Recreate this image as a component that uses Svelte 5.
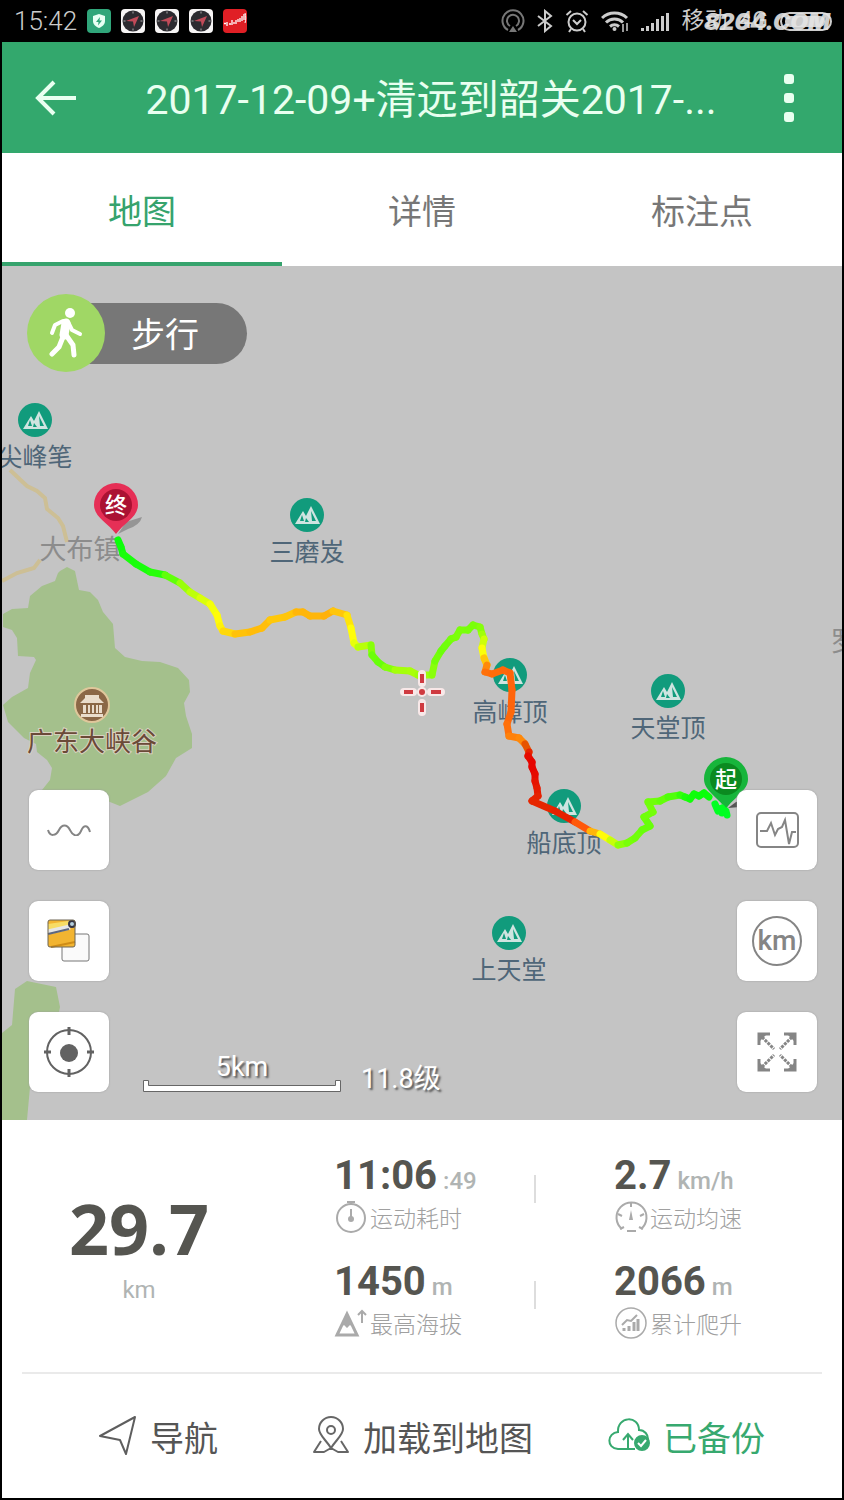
<script>
    let activeTab = "map";
    let lineMode = "wave";

    const tabs = [
        { id: "map", label: "地图" },
        { id: "detail", label: "详情" },
        { id: "points", label: "标注点" }
    ];

    const metrics = [
        { icon: "watch", value: "11:06", unit: ":49", label: "运动耗时", divider: true },
        { icon: "gauge", value: "2.7", unit: "km/h", label: "运动均速" },
        { icon: "peak", value: "1450", unit: "m", label: "最高海拔", divider: true },
        { icon: "climb", value: "2066", unit: "m", label: "累计爬升" }
    ];

    const peaks = [
        { x: 35, y: 420, name: "尖峰笔" },
        { x: 307, y: 515, name: "三磨岌" },
        { x: 510, y: 675, name: "高嶂顶" },
        { x: 668, y: 691, name: "天堂顶" },
        { x: 564, y: 806, name: "船底顶" },
        { x: 509, y: 933, name: "上天堂" }
    ];

    // x, y, hue (120 = easy, 0 = steep)
    const track = [
        [118, 540, 120], [121, 547, 120], [123, 554, 118], [136, 564, 115], [150, 572, 118], [165, 575, 108],
        [180, 583, 90], [190, 592, 80], [200, 598, 72], [210, 604, 66], [217, 615, 60], [220, 626, 58],
        [223, 631, 55], [235, 634, 46], [250, 632, 44], [262, 628, 43], [270, 620, 45], [285, 617, 48],
        [296, 612, 44], [303, 612, 40], [310, 616, 44], [324, 616, 40], [333, 611, 42], [347, 615, 50],
        [351, 628, 57], [354, 643, 62], [358, 647, 70], [371, 645, 85], [372, 655, 94], [378, 662, 98],
        [385, 667, 96], [395, 670, 84], [410, 671, 80], [418, 675, 82], [432, 675, 86], [435, 661, 92],
        [441, 651, 96], [445, 646, 96], [451, 639, 94], [456, 637, 92], [460, 630, 92], [468, 630, 93],
        [473, 625, 93], [480, 627, 92], [482, 634, 88], [484, 639, 78], [482, 648, 66], [484, 658, 56],
        [487, 665, 36], [485, 672, 26], [492, 674, 24], [503, 670, 24], [510, 673, 22], [512, 690, 22],
        [511, 712, 22], [507, 724, 24], [509, 736, 26], [519, 738, 32], [525, 744, 30], [529, 752, 14],
        [528, 756, 4], [532, 762, 2], [532, 767, 0], [535, 774, 2], [535, 781, 4], [537, 788, 6],
        [538, 796, 8], [532, 801, 10], [555, 811, 10], [575, 822, 8], [590, 831, 30], [600, 834, 54],
        [610, 840, 64], [618, 845, 84], [627, 843, 92], [635, 838, 94], [642, 830, 96], [650, 826, 98],
        [644, 817, 96], [653, 812, 94], [648, 802, 94], [660, 801, 96], [668, 797, 100], [680, 795, 106],
        [685, 797, 114], [690, 799, 118], [694, 794, 118], [699, 796, 120], [704, 793, 120], [709, 797, 120]
    ];

    const tail = "M715 804l3 7 4 -3 0 5 4 -2 1 4";

    const segments = track.slice(1).map((point, i) => ({
        from: track[i],
        to: point,
        color: `hsl(${(track[i][2] + point[2]) / 2} 100% ${point[2] < 15 ? 45 : 52}%)`
    }));
</script>

<div class="screen">
    <div class="status">
        <span class="clock">15:42</span>
        <div class="apps">
            <svg viewBox="0 0 24 24">
                <rect width="24" height="24" rx="4" fill="#30a67a" />
                <path d="M12 5l6 2v5c0 3.500-2.500 5.500-6 7-3.500-1.500-6-3.500-6-7V7z" fill="#e8fff4" />
                <path d="M13 8l-4 5h2.500l-.5 3.500 4-5h-2.500z" fill="#30a67a" />
            </svg>
            {#each [1, 2, 3] as app}
                <svg viewBox="0 0 24 24">
                    <rect width="24" height="24" rx="4" fill="#f7f5f5" />
                    <circle cx="12" cy="12" r="10.500" fill="#2c2b30" />
                    <path d="M12 2.500v2M12 19.500v2M2.500 12h2M19.500 12h2" stroke="#aaa" />
                    <path d="M18 7l-5 11-1-5.500L5 12z" fill="#c04a58" />
                </svg>
            {/each}
            <svg viewBox="0 0 24 24">
                <rect width="24" height="24" rx="4" fill="#e01f25" />
                <path d="M1 14.500h2M4 13v4M6 15h2M9 11v5M11 13v2M13 11v4M15 10v3M17 9v4M19 7v5M21 5v6" fill="none" stroke="#fff" stroke-width="1.300" />
                <path d="M22 4c1 3 1 7 0 10" fill="none" stroke="#fff" />
            </svg>
        </div>
        <div class="signals">
            <svg width="24" height="24" viewBox="0 0 24 24" fill="none" stroke="#777" stroke-width="2">
                <path d="M7 21a10.500 10.500 0 1 1 10 0M9 17a6 6 0 1 1 6 0" />
                <path d="M12 17l4 6H8z" fill="#777" stroke="none" />
            </svg>
            <svg width="16" height="24" viewBox="0 0 16 24" fill="none" stroke="#ccc" stroke-width="2">
                <path d="M1 7l13 10-6 5V2l6 5L1 17" />
            </svg>
            <svg width="24" height="24" viewBox="0 0 24 24" fill="none" stroke="#ccc" stroke-width="2">
                <circle cx="12" cy="13" r="8.500" />
                <path d="M8 11l4 4 4-4M1.500 6L6 2M22.500 6L18 2M6 20l-2 3M18 20l2 3" />
            </svg>
            <svg width="28" height="24" viewBox="0 0 28 24" fill="none" stroke="#ccc" stroke-width="3">
                <path d="M1 9a18 18 0 0 1 25 0M5 13.500a12 12 0 0 1 17 0M9 17.500a7 7 0 0 1 9 0" />
                <circle cx="13.500" cy="20" r="2" fill="#ccc" stroke="none" />
                <path d="M22 15v8M26 14v8" stroke-width="1.500" />
            </svg>
            <svg width="28" height="24" viewBox="0 0 28 24" fill="#ccc">
                <path d="M0 19h3v3H0zM5 17h3v5H5zM10 14h3v8h-3zM15 10h3v12h-3zM20 7h3v15h-3zM25 4h3v18h-3z" />
            </svg>
            <span>移动</span>
            <span>4G</span>
            <svg width="52" height="24" viewBox="0 0 52 24">
                <rect x="1" y="4" width="50" height="17" rx="8.500" fill="none" stroke="#ccc" stroke-width="2" />
                <rect x="5" y="7" width="40" height="11" rx="5" fill="#ccc" />
            </svg>
        </div>
        <span class="watermark">8264.COM</span>
    </div>

    <header>
        <button class="plain" aria-label="返回">
            <svg width="44" height="40" viewBox="0 0 44 40" fill="none" stroke="#e9fff0" stroke-width="4">
                <path d="M20 4L4 20l16 16M4 20h38" />
            </svg>
        </button>
        <h1>2017-12-09+清远到韶关2017-...</h1>
        <button class="plain more" aria-label="更多">
            <svg width="10" height="50" viewBox="0 0 10 50" fill="#e9fff0">
                <rect y="1" width="10" height="10" rx="3" />
                <rect y="20" width="10" height="10" rx="3" />
                <rect y="39" width="10" height="10" rx="3" />
            </svg>
        </button>
    </header>

    <nav>
        {#each tabs as tab}
            <button class:active={activeTab === tab.id} on:click={() => (activeTab = tab.id)}>{tab.label}</button>
        {/each}
    </nav>

    <main>
        <svg class="canvas" viewBox="2 266 840 854" preserveAspectRatio="xMidYMid slice">
            <g fill="none" stroke="#cdbf95" stroke-width="4">
                <path d="M10 470l17 16 10 5 8 7 2 11 11 9 5 8 4 16M2 581l15-8 17-5 6-8" />
            </g>
            <path
                fill="#a4c08c"
                d="M60 571L67 567 75 571 79 590 90 592 98 600 103 612 113 624 115 648 125 657 142 661 160 662 178 668 189 680 190 692 184 703 186 716 192 734 192 748 176 758 166 776 148 792 120 806 105 800 42 790 50 780 52 768 47 760 37 752 36 744 24 738 8 722 3 705 12 697 28 688 30 673 36 660 34 657 18 656 17 638 12 630 3 627 3 614 12 609 28 608 30 596 42 586 55 581 58 573z"
            />
            <path fill="#a4c08c" d="M15 989l12-8 29 6 4 20-10 50-18 8-5 55H2V1033l10-8z" />

            {#each peaks as peak}
                <g transform="translate({peak.x} {peak.y})">
                    <circle r="17" fill="#119b7c" />
                    <path d="M-12 9L-4-4-1 1 4-9 13 9z" fill="#cfe4e0" />
                    <path d="M-5 0l2 6h-4zM-1 3l3 4h-4zM4-4l5 10H5z" fill="#119b7c" />
                    <text class="peak" y="46">{peak.name}</text>
                </g>
            {/each}
            <text class="town" x="80" y="559">大布镇</text>
            <text class="town" x="844" y="651">罗</text>

            <g transform="translate(92 705)">
                <circle r="17" fill="#8b6746" stroke="#dfc79b" stroke-width="2" />
                <path d="M-7-10H7V-7L12-2H-12l5-5zM-9 0h3v8h-3zM-4 0h2v8h-2zM0 0h2v8H0zM4 0h2v8H4zM7 0h3v8H7zM-11 9h22v3h-22z" fill="#eadccb" />
                <text class="scenic" y="46">广东大峡谷</text>
            </g>

            <path d="M118 534l8-12 16-5q-2 8-14 12z" fill="#777" opacity=".6" />
            <path d="M116 534C108 523 94 517 94 505a22 22 0 0 1 44 0c0 12-14 18-22 29z" fill="#e62f56" />
            <circle cx="116" cy="505" r="16" fill="#ab1233" />
            <text class="mark" x="116" y="513">终</text>

            <path d="M728 808l8-6 12-3-8 8z" fill="#555" />
            <path d="M726 809C718 797 704 791 704 779a22 22 0 0 1 44 0c0 12-14 18-22 30z" fill="#17b53b" />
            <circle cx="726" cy="779" r="16" fill="#0b8a20" />
            <text class="mark" x="726" y="787">起</text>

            <g fill="none" stroke-width="7" stroke-linecap="round" stroke-linejoin="round">
                {#each segments as s}
                    <path d="M{s.from[0]} {s.from[1]}L{s.to[0]} {s.to[1]}" stroke={s.color} />
                {/each}
                <path d={tail} stroke="#0f2" />
            </g>

            <g stroke-linecap="round">
                <path d="M422 674v9M422 703v9M404 692h9M431 692h10" stroke="#f8e8e8" stroke-width="8" />
                <circle cx="422" cy="692" r="5" fill="#f8e8e8" />
                <path d="M422 674v9M422 703v9M404 692h9M431 692h10" stroke="#cf3a40" stroke-width="4" stroke-linecap="butt" />
                <circle cx="422" cy="692" r="3" fill="#cf3a40" />
            </g>
        </svg>

        <div class="mode">
            <span class="walker">
                <svg width="34" height="50" viewBox="0 0 34 50">
                    <circle cx="21" cy="5" r="5" fill="#fff" />
                    <g fill="none" stroke="#fff" stroke-linecap="round" stroke-linejoin="round">
                        <path d="M17 15L15 27" stroke-width="9" />
                        <path d="M14 13L6 17 3 25M19 14l4 8 8 4" stroke-width="4" />
                        <path d="M14 29L10 39 3 46M17 27l7 10 1 10" stroke-width="5" />
                    </g>
                </svg>
            </span>
            <span class="pill">步行</span>
        </div>

        <div class="tools left">
            <button aria-label="轨迹线" on:click={() => (lineMode = lineMode === "wave" ? "flat" : "wave")}>
                <svg width="44" height="12" viewBox="0 0 44 12" fill="none" stroke="#858585" stroke-width="2">
                    <path d="M1 6C3 13 9 12 12 6S20 0 23 6s8 8 11 1 7-6 9 1" />
                </svg>
            </button>
            <button aria-label="图层">
                <svg width="44" height="44" viewBox="0 0 44 44">
                    <rect x="15" y="15" width="27" height="27" rx="2" fill="#fafafa" stroke="#777" />
                    <rect x="1" y="1" width="27" height="27" rx="2" fill="#f2b431" />
                    <path d="M1 5l27-4v5L1 11z" fill="#f7dc65" />
                    <path d="M1 13l22-5" stroke="#e6e6e6" stroke-width="5" />
                    <path d="M1 15l21-5" stroke="#5d6780" stroke-width="2" />
                    <path d="M4 28l24-5" stroke="#cf8c16" stroke-width="2" />
                    <circle cx="25" cy="5" r="3" fill="#b5d0de" stroke="#334" stroke-width="2" />
                    <rect x="1" y="1" width="27" height="27" rx="2" fill="none" stroke="#6d6452" />
                </svg>
            </button>
            <button aria-label="定位">
                <svg width="52" height="52" viewBox="0 0 52 52" fill="none" stroke="#626262">
                    <circle cx="26" cy="26" r="22" stroke-width="2" />
                    <path d="M26 1v8M26 43v8M1 26h7M44 26h7" stroke-width="3" />
                    <circle cx="26" cy="27" r="9" fill="#626262" stroke="none" />
                </svg>
            </button>
        </div>

        <div class="tools right">
            <button aria-label="图表">
                <svg width="44" height="36" viewBox="0 0 44 36" fill="none" stroke="#858585" stroke-width="2">
                    <rect x="2" y="1" width="41" height="34" rx="4" />
                    <path d="M5 19h7l4-8 4 12 3-6 4-2 3-7 4 24 3-12h4" />
                </svg>
            </button>
            <button aria-label="公里">
                <svg width="50" height="50" viewBox="0 0 50 50">
                    <circle cx="25" cy="25" r="24" fill="none" stroke="#858585" stroke-width="2" />
                    <text class="kmText" x="25" y="34">km</text>
                </svg>
            </button>
            <button aria-label="全屏">
                <svg width="40" height="40" viewBox="0 0 40 40" fill="none" stroke="#858585" stroke-width="3">
                    <path d="M2 13V2h11M27 2h11v11M38 27v11H27M13 38H2V27" />
                    <path d="M3 3h6l-6 6zM37 3h-6l6 6zM37 37h-6l6-6zM3 37h6l-6-6z" fill="#858585" stroke="none" />
                    <path d="M5 5l12 12M35 5L23 17M35 35L23 23M5 35l12-12" stroke-dasharray="3 1" />
                </svg>
            </button>
        </div>

        <div class="scale">
            <div class="ruler">
                <span>5km</span>
                <svg width="198" height="12" viewBox="0 0 198 12">
                    <path d="M.5.5h5v5h187v-5h5v11H.5z" fill="#fff" stroke="#666" />
                </svg>
            </div>
            <span>11.8级</span>
        </div>
    </main>

    <section class="stats">
        <div class="distance">
            <strong>29.7</strong>
            <span>km</span>
        </div>
        <div class="metrics">
            {#each metrics as m}
                <div class="metric">
                    <div>
                        <p class="value"><strong>{m.value}</strong> <span>{m.unit}</span></p>
                        <p class="label">
                            <svg width="34" height="34" viewBox="0 0 34 34" fill="none" stroke="#aaa" stroke-width="2">
                                {#if m.icon === "watch"}
                                    <circle cx="17" cy="18" r="14" />
                                    <path d="M13 2h8M17 2v3M17 9v9" />
                                    <circle cx="17" cy="19" r="2" fill="#aaa" />
                                {:else if m.icon === "gauge"}
                                    <path d="M8 29a15 15 0 1 1 19 0" />
                                    <path d="M17 3v4M4 14l4 2M30 14l-4 2M6 29l4-2M29 29l-4-2M13 31h9" stroke-width="2" />
                                    <path d="M17 10l2 10h-4z" fill="#aaa" stroke="none" />
                                {:else if m.icon === "peak"}
                                    <path d="M3 29L13 8l10 21z" stroke-width="3" />
                                    <path d="M13 7l6 14-3-2-3 3-3-3-3 2z" fill="#aaa" stroke="none" />
                                    <path d="M28 17V5M24 9l4-4 4 4" />
                                {:else}
                                    <circle cx="17" cy="17" r="15" stroke-width="1.500" />
                                    <path d="M8 19l5-5 4 1 6-6" />
                                    <path d="M10 22v3M15 20v5M20 16v9M24 13v12" stroke-width="3" />
                                {/if}
                            </svg>
                            {m.label}
                        </p>
                    </div>
                    {#if m.divider}
                        <i></i>
                    {/if}
                </div>
            {/each}
        </div>
    </section>

    <footer>
        <button>
            <svg width="40" height="44" viewBox="0 0 40 44" fill="none" stroke="#5e5e5e" stroke-width="2" stroke-linejoin="round">
                <path d="M37 3L2 22l20 4 6 14z" />
            </svg>
            导航
        </button>
        <button>
            <svg width="40" height="44" viewBox="0 0 40 44" fill="none" stroke="#666" stroke-width="2" stroke-linejoin="round">
                <path d="M20 34C15 26 8 21 8 15a12 12 0 0 1 24 0c0 6-7 11-12 19z" />
                <circle cx="20" cy="16" r="4" />
                <path d="M10 27L3 38h10l7-4 7 4h10l-7-11" />
            </svg>
            加载到地图
        </button>
        <button class="saved">
            <svg width="44" height="44" viewBox="0 0 44 44" fill="none" stroke="#37a96f" stroke-width="2">
                <path d="M28 35H11C-1 34 0 19 11 18 10 2 32 1 32 16c6 0 9 5 9 9" />
                <path d="M21 34V21M16 26l5-6 5 6" />
                <circle cx="35" cy="29" r="7" fill="#37a96f" />
                <path d="M31 29l3 3 5-6" stroke="#fff" />
            </svg>
            已备份
        </button>
    </footer>
</div>

<style>
    :global(body) {
        margin: 0;
        background: #000;
    }

    .screen {
        font-family: Roboto, "Noto Sans CJK SC", sans-serif;
        border: 2px solid #000;
        border-top: 0;
        background: #fff;
        color: #555;
    }

    .screen svg {
        display: block;
        flex-shrink: 0;
    }

    button {
        font: inherit;
        color: inherit;
        border: 0;
        padding: 0;
        background: none;
        cursor: pointer;
    }

    .status {
        position: relative;
        display: flex;
        align-items: center;
        height: 42px;
        padding: 0 10px 0 12px;
        background: #000;
        color: #ccc;
        font-size: 24px;
    }

    .clock {
        font-size: 26px;
        font-weight: 300;
    }

    .apps {
        display: flex;
        gap: 10px;
        margin-left: 10px;
    }

    .apps svg {
        width: 24px;
        height: 24px;
    }

    .signals {
        display: flex;
        align-items: center;
        gap: 12px;
        margin-left: auto;
        font-size: 23px;
        line-height: 24px;
    }

    .watermark {
        position: absolute;
        right: 12px;
        top: 8px;
        font: italic 900 23px/28px Inter, sans-serif;
        color: #e4e4e4;
        opacity: 0.9;
    }

    header {
        display: flex;
        align-items: center;
        justify-content: space-between;
        height: 111px;
        padding: 0 48px 0 32px;
        background: #33a86d;
    }

    h1 {
        margin: 0;
        padding-bottom: 4px;
        font-size: 41px;
        font-weight: 400;
        color: #e9fff0;
        white-space: nowrap;
    }

    nav {
        display: grid;
        grid-template-columns: repeat(3, 1fr);
        height: 113px;
    }

    nav button {
        font-size: 34px;
        color: #777;
        border-top: 4px solid transparent;
        border-bottom: 4px solid transparent;
    }

    nav button.active {
        color: #36a36d;
        border-bottom-color: #36a36d;
    }

    main {
        position: relative;
        height: 854px;
        background: #c4c4c4;
        overflow: hidden;
    }

    .canvas {
        width: 100%;
        height: 100%;
    }

    .canvas text {
        text-anchor: middle;
    }

    .peak {
        font-size: 25px;
        fill: #4f6678;
    }

    .town {
        font-size: 27px;
        fill: #8c8c8c;
    }

    .scenic {
        font-size: 26px;
        fill: #6b4a38;
        stroke: #d9d2c0;
        stroke-width: 2px;
        paint-order: stroke;
    }

    .mark {
        font-size: 22px;
        font-weight: 500;
        fill: #fff;
    }

    .mode {
        position: absolute;
        left: 25px;
        top: 28px;
        display: flex;
        align-items: center;
    }

    .walker {
        display: grid;
        place-items: center;
        width: 78px;
        height: 78px;
        border-radius: 50%;
        background: #a0d765;
        z-index: 1;
    }

    .pill {
        margin-left: -16px;
        padding: 4px 48px 0 42px;
        border-radius: 0 31px 31px 0;
        background: #777;
        color: #fff;
        font-size: 34px;
        line-height: 57px;
    }

    .tools {
        position: absolute;
        bottom: 28px;
        display: flex;
        flex-direction: column;
        gap: 31px;
    }

    .tools.left {
        left: 27px;
    }

    .tools.right {
        right: 25px;
    }

    .tools button {
        display: grid;
        place-items: center;
        width: 80px;
        height: 80px;
        border-radius: 9px;
        background: #fff;
        box-shadow: 0 0 2px #999;
    }

    .kmText {
        font-size: 28px;
        font-weight: 500;
        fill: #858585;
        text-anchor: middle;
    }

    .scale {
        position: absolute;
        left: 141px;
        bottom: 28px;
        display: flex;
        align-items: flex-end;
        gap: 20px;
        color: #fff;
        font-size: 27px;
        line-height: 26px;
        text-shadow: 2px 2px 2px #555;
    }

    .ruler {
        display: flex;
        flex-direction: column;
        align-items: center;
    }

    .stats {
        display: grid;
        grid-template-columns: 1fr 2fr;
        padding: 34px 0 32px;
    }

    .distance {
        display: flex;
        flex-direction: column;
        align-items: center;
        padding: 34px 6px 0 0;
        color: #b0b4b3;
        font-size: 24px;
    }

    .distance strong {
        color: #555550;
        font: bold 70px/80px "Open Sans", sans-serif;
    }

    .distance span {
        margin-top: 8px;
    }

    .metrics {
        display: grid;
        grid-template-columns: 1fr 1fr;
        row-gap: 26px;
    }

    .metric {
        display: flex;
        justify-content: space-between;
        padding: 0 26px 0 52px;
    }

    .metric p {
        margin: 0;
        white-space: nowrap;
    }

    .metric i {
        width: 2px;
        height: 28px;
        margin-top: 21px;
        background: #ddd;
    }

    .value {
        height: 46px;
        line-height: 44px;
        color: #b0b4b3;
        font-size: 24px;
        font-weight: 500;
    }

    .value strong {
        color: #555550;
        font-size: 40px;
    }

    .label {
        display: flex;
        align-items: center;
        gap: 2px;
        height: 34px;
        color: #a0a0a0;
        font-size: 23px;
        font-weight: 300;
    }

    footer {
        display: grid;
        grid-template-columns: repeat(3, 1fr);
        margin: 0 20px;
        padding: 0 4px;
        height: 124px;
        border-top: 2px solid #eaeaea;
    }

    footer button {
        display: flex;
        align-items: center;
        justify-content: center;
        gap: 12px;
        font-size: 34px;
    }

    .saved {
        color: #37a96f;
    }
</style>
